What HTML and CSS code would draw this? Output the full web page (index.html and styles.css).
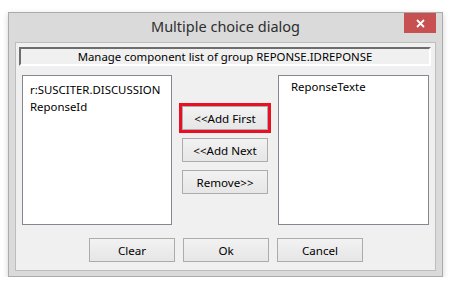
FILE: index.html
```html
<!DOCTYPE html>
<html>
<head>
<meta charset="utf-8">
<link rel="stylesheet" href="styles.css">
</head>
<body>
<div class="window">
  <div class="titlebar">
    <span class="title">Multiple choice dialog</span>
    <div class="close"><svg width="9" height="9" viewBox="0 0 9 9"><path d="M1 1 L8 8 M8 1 L1 8" stroke="#fff" stroke-width="1.8"/></svg></div>
  </div>
  <div class="client">
    <div class="header">Manage component list of group REPONSE.IDREPONSE</div>
    <div class="main">
      <div class="list list-left">
        <div class="item">r:SUSCITER.DISCUSSION</div>
        <div class="item">ReponseId</div>
      </div>
      <div class="middle">
        <button class="btn focused">&lt;&lt;Add First</button>
        <button class="btn">&lt;&lt;Add Next</button>
        <button class="btn">Remove&gt;&gt;</button>
      </div>
      <div class="list list-right">
        <div class="item">ReponseTexte</div>
      </div>
    </div>
    <div class="footer">
      <button class="btn">Clear</button>
      <button class="btn">Ok</button>
      <button class="btn">Cancel</button>
    </div>
  </div>
</div>
</body>
</html>
```
FILE: styles.css
```css
html, body {
  margin: 0;
  padding: 0;
  background: #ffffff;
}
body {
  padding: 12px 0 0 8px;
  font-family: "Noto Sans", "Open Sans", sans-serif;
}
.window {
  width: 433px;
  height: 263px;
  border: 1px solid #ababab;
  background: #dadada;
  box-shadow: 0 2px 6px rgba(0, 0, 0, 0.18);
  display: flex;
  flex-direction: column;
}
.titlebar {
  height: 29px;
  position: relative;
  display: flex;
  justify-content: center;
  align-items: center;
}
.title {
  font-size: 14.5px;
  color: #2e2e2e;
  margin-top: -3px;
}
.close {
  position: absolute;
  top: 0;
  right: 6px;
  width: 32px;
  height: 20px;
  background: #c75050;
  display: flex;
  align-items: center;
  justify-content: center;
}
.client {
  margin: 0 6px 5px 6px;
  flex: 1;
  border: 1px solid #bdbdbd;
  background: #f0f0f0;
  display: flex;
  flex-direction: column;
}
.header {
  margin: 4px 4px 0 3px;
  height: 15px;
  border-top: 2px solid #6d6d6d;
  border-left: 2px solid #6d6d6d;
  border-bottom: 2px solid #ffffff;
  border-right: 2px solid #ffffff;
  background: #f0f0f0;
  font-size: 11.4px;
  line-height: 15px;
  text-align: center;
  color: #000;
}
.main {
  margin: 9px 6px 0 6px;
  display: flex;
  gap: 10px;
}
.list {
  height: 148px;
  border: 1px solid #828790;
  background: #ffffff;
  font-size: 11.4px;
  line-height: 17px;
  color: #000;
}
.list-left {
  width: 148px;
  padding: 0;
}
.list-left .item:first-child {
  margin-top: 5px;
}
.list-left .item {
  padding-left: 7px;
}
.list-right {
  width: 149px;
}
.list-right .item {
  margin-top: 2px;
  padding-left: 12px;
}
.middle {
  width: 86px;
  padding-top: 31px;
  display: flex;
  flex-direction: column;
  gap: 8px;
}
.btn {
  width: 86px;
  height: 24px;
  border: 1px solid #acacac;
  background: linear-gradient(#f2f2f2, #e6e6e6);
  font-family: "Noto Sans", "Open Sans", sans-serif;
  font-size: 11.6px;
  color: #000;
  padding: 0;
  margin: 0;
}
.focused {
  outline: 3px solid #e81123;
  outline-offset: 0;
}
.footer {
  margin-top: 13px;
  display: flex;
  justify-content: center;
  gap: 8px;
  padding-left: 1px;
}
```
